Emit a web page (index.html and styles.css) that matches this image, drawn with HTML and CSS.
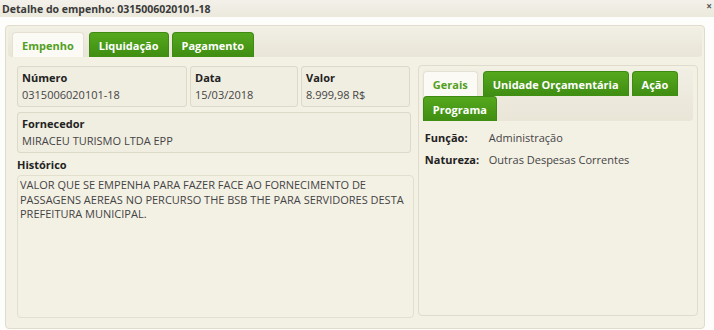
FILE: index.html
```html
<!DOCTYPE html>
<html lang="pt-BR">
<head>
    <meta charset="UTF-8">
    <title>Detalhe do empenho</title>
    <link rel="stylesheet" href="styles.css">
</head>
<body>
    <div class="titlebar">
        <span>Detalhe do empenho: 0315006020101-18</span>
        <span class="close">×</span>
    </div>
    <div class="dialog">
        <div class="tabbar">
            <div class="tab active">Empenho</div>
            <div class="tab">Liquidação</div>
            <div class="tab">Pagamento</div>
        </div>
        <div class="content">
            <div class="left">
                <div class="row">
                    <div class="field numero">
                        <div class="label">Número</div>
                        <div class="value">0315006020101-18</div>
                    </div>
                    <div class="field data">
                        <div class="label">Data</div>
                        <div class="value">15/03/2018</div>
                    </div>
                    <div class="field valor">
                        <div class="label">Valor</div>
                        <div class="value">8.999,98 R$</div>
                    </div>
                </div>
                <div class="field fornecedor">
                    <div class="label">Fornecedor</div>
                    <div class="value">MIRACEU TURISMO LTDA EPP</div>
                </div>
                <div class="label historico-label">Histórico</div>
                <div class="historico">VALOR QUE SE EMPENHA PARA FAZER FACE AO FORNECIMENTO DE PASSAGENS AEREAS NO PERCURSO THE BSB THE PARA SERVIDORES DESTA PREFEITURA MUNICIPAL.</div>
            </div>
            <div class="right">
                <div class="tabbar small">
                    <div class="tab active">Gerais</div>
                    <div class="tab">Unidade Orçamentária</div>
                    <div class="tab">Ação</div>
                    <div class="tab">Programa</div>
                </div>
                <div class="info">
                    <div class="info-row"><span class="key">Função:</span><span>Administração</span></div>
                    <div class="info-row"><span class="key">Natureza:</span><span>Outras Despesas Correntes</span></div>
                </div>
            </div>
        </div>
    </div>
</body>
</html>
```

FILE: styles.css
```css
body {
    margin: 0;
    font-family: "Open Sans", "Noto Sans", Arial, sans-serif;
    font-size: 11px;
    color: #333;
    background: #fdfdfb;
}
.titlebar {
    height: 17px;
    padding: 0 2px;
    display: flex;
    justify-content: space-between;
    align-items: center;
    font-weight: bold;
    font-size: 10.5px;
    color: #3a3a3a;
    background: linear-gradient(#f3f1ea, #ebe8dc);
}
.close {
    font-size: 10px;
    color: #555;
    margin-top: -6px;
}
.dialog {
    margin: 8px 9px 5px 5px;
    height: 298px;
    border: 1px solid #e0dccb;
    border-radius: 4px;
    background: #f3f0e4;
    padding: 2px;
}
.tabbar {
    display: flex;
    flex-wrap: wrap;
    gap: 0 3px;
    padding: 4px 4px 0;
    background: linear-gradient(#f1eee4, #e9e5d7);
    border-radius: 4px;
}
.tab {
    height: 25px;
    line-height: 25px;
    padding: 0 9px;
    font-size: 11px;
    font-weight: bold;
    color: #fff;
    background: linear-gradient(#55a81d, #3f8d12);
    border: 1px solid #3e8a12;
    border-bottom: none;
    border-radius: 4px 4px 0 0;
    box-sizing: border-box;
}
.tab.active {
    color: #52a01e;
    background: #fbfaf5;
    border-color: #e4e0d2;
    margin-right: 2px;
}
.content {
    display: flex;
    gap: 4px;
    padding: 9px 4px 0 9px;
}
.left {
    width: 398px;
}
.row {
    display: flex;
    gap: 3px;
    margin-bottom: 5px;
}
.field {
    border: 1px solid #ddd9c8;
    border-radius: 3px;
    background: #f0ede1;
    padding: 3px 4px;
    box-sizing: border-box;
}
.numero { width: 170px; }
.data { width: 108px; }
.valor { width: 109px; }
.fornecedor { width: 394px; }
.label {
    font-weight: bold;
    font-size: 11px;
    color: #222;
    line-height: 16px;
}
.value {
    line-height: 17px;
    color: #444;
}
.historico-label {
    margin: 4px 0 2px;
}
.historico {
    height: 143px;
    box-sizing: border-box;
    border: 1px solid #e3dfcf;
    border-radius: 4px;
    padding: 2px;
    line-height: 14.5px;
    color: #444;
}
.right {
    width: 281px;
    height: 251px;
    box-sizing: border-box;
    border: 1px solid #e0dccd;
    border-radius: 4px;
    padding: 3px;
    margin-top: -1px;
}
.tabbar.small {
    padding: 2px 0 0 1px;
    width: 270px;
}
.info {
    padding: 6px 3px;
}
.info-row {
    display: flex;
    line-height: 22px;
    color: #444;
}
.key {
    font-weight: bold;
    color: #222;
    width: 64px;
}
```
